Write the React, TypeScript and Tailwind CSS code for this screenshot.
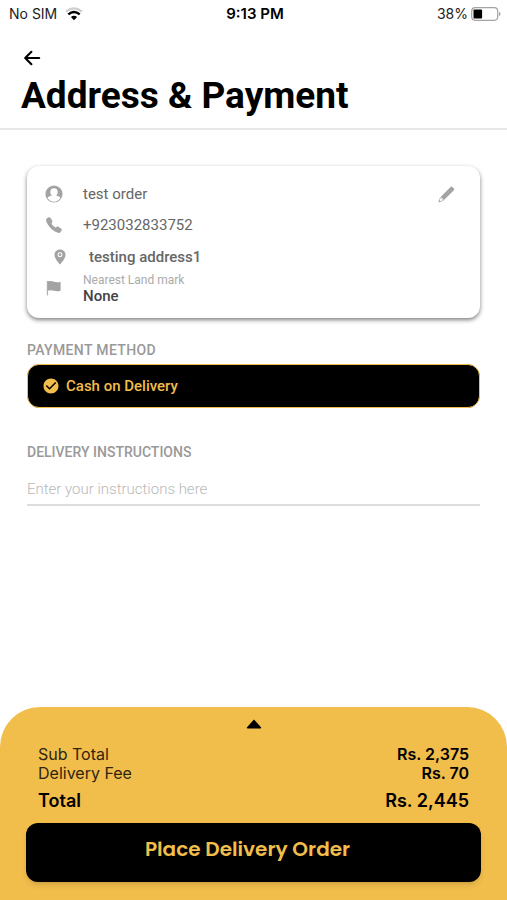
import { useState } from "react";
import { IoCall } from "react-icons/io5";
import { MdCheckCircle } from "react-icons/md";

function WifiIcon() {
  return (
    <svg viewBox="0 0 18 14" className="w-[18px] h-[14px]" fill="none">
      <path d="M1 4.6Q9 -1.8 17 4.6" stroke="#cfcfcf" strokeWidth="2.2" />
      <path d="M3.3 7.4Q9 2.6 14.7 7.4" stroke="#000" strokeWidth="2.4" />
      <path d="M5.9 10Q9 7.4 12.1 10L9 13.2Z" fill="#000" />
    </svg>
  );
}

function BatteryIcon() {
  return (
    <svg viewBox="0 0 30 14" className="w-[30px] h-[14px]" fill="none">
      <rect x="0.7" y="0.7" width="26" height="12.6" rx="3.5" stroke="#a3a3a3" strokeWidth="1.2" />
      <rect x="2.5" y="2.5" width="8.6" height="9" rx="1" fill="#000" />
      <path d="M28 4.8Q29.6 5.6 29.6 7T28 9.2Z" fill="#a3a3a3" />
    </svg>
  );
}

function BackIcon() {
  return (
    <svg
      viewBox="0 0 22 22"
      className="w-[22px] h-[22px]"
      fill="none"
      stroke="currentColor"
      strokeWidth="2.1"
      strokeLinecap="round"
      strokeLinejoin="round"
    >
      <path d="M18.2 11H4.4M10.4 4.8L4.2 11L10.4 17.2" />
    </svg>
  );
}

function UserIcon() {
  return (
    <svg viewBox="0 0 18 18" className="w-[18px] h-[18px]">
      <circle cx="9" cy="9" r="8.6" fill="#a3a3a3" />
      <path
        d="M9 3.2C11.3 3.2 12.7 4.8 12.7 6.9C12.7 8.5 12 9.8 11 10.5C13.4 10.9 14.9 11.7 15.4 13A7.4 7.4 0 0 1 2.6 13C3.1 11.7 4.6 10.9 7 10.5C6 9.8 5.3 8.5 5.3 6.9C5.3 4.8 6.7 3.2 9 3.2Z"
        fill="#fff"
      />
    </svg>
  );
}

function PinIcon() {
  return (
    <svg viewBox="0 0 18 18" className="w-[18px] h-[18px]">
      <path
        d="M9 1.4C5.8 1.4 3.5 3.7 3.5 6.7C3.5 10.3 7.2 14.2 9 16.6C10.8 14.2 14.5 10.3 14.5 6.7C14.5 3.7 12.2 1.4 9 1.4Z"
        fill="#a3a3a3"
      />
      <circle cx="9" cy="6.7" r="1.9" fill="none" stroke="#fff" strokeWidth="1.1" />
    </svg>
  );
}

function FlagIcon() {
  return (
    <svg viewBox="0 0 18 18" className="w-[18px] h-[18px]">
      <path d="M2.4 2V16.4" stroke="#b5b5b5" strokeWidth="1.3" />
      <path
        d="M2.6 2.4C5.2 1.4 7.2 2.2 9 2.8C11.2 3.5 13.2 3.3 15.6 2.9V11.7C13.2 12.5 11 12.4 9 11.8C6.8 11.1 5 10.8 2.6 11.8Z"
        fill="#a3a3a3"
      />
    </svg>
  );
}

function PencilIcon() {
  return (
    <svg viewBox="0 0 20 20" className="w-5 h-5">
      <path
        d="M14.6 2.9Q15.4 2.1 16.2 2.9L17.9 4.6Q18.7 5.4 17.9 6.2L8 16L4.8 12.7Z"
        fill="#a3a3a3"
      />
      <path d="M4.4 13.1L2.9 17.9L7.6 16.4Z" fill="#fff" stroke="#b5b5b5" strokeWidth="0.8" />
      <path d="M3.4 16L2.6 18.2L4.8 17.4Z" fill="#a3a3a3" />
    </svg>
  );
}

function CaretUpIcon() {
  return (
    <svg viewBox="0 0 16 10" className="w-4 h-[10px]">
      <path d="M8 0.4L15 8.2Q15.5 9.4 14.4 9.4H1.6Q0.5 9.4 1 8.2Z" fill="#000" />
    </svg>
  );
}

function StatusBar() {
  return (
    <div className="grid grid-cols-3 items-center h-7 pl-[9px] pr-[6px] font-[Inter,sans-serif] text-sm text-[#222]">
      <div className="flex items-center gap-2">
        <span>No SIM</span>
        <WifiIcon />
      </div>
      <span className="text-center text-[15px] font-semibold text-black">9:13 PM</span>
      <div className="flex items-center justify-end gap-[3px]">
        <span>38%</span>
        <BatteryIcon />
      </div>
    </div>
  );
}

function AddressCard() {
  return (
    <section className="relative mx-[27px] mt-9 rounded-xl bg-white px-[18px] pt-[17px] pb-[14px] text-[#666] shadow-[0_2px_4px_rgba(0,0,0,0.5)]">
      <button aria-label="Edit address" className="absolute right-6 top-[18px]">
        <PencilIcon />
      </button>
      <ul className="text-[15px]">
        <li className="flex items-center gap-5 h-[22px]">
          <UserIcon />
          <span>test order</span>
        </li>
        <li className="mt-[9px] flex items-center gap-5 h-[22px]">
          <IoCall size={18} className="text-[#a3a3a3]" />
          <span>+923032833752</span>
        </li>
        <li className="mt-[10px] flex items-center gap-5 h-[22px] pl-[6px] font-medium">
          <PinIcon />
          <span>testing address1</span>
        </li>
        <li className="mt-1 flex items-center gap-5">
          <FlagIcon />
          <div>
            <p className="text-xs leading-4 text-[#aaa]">Nearest Land mark</p>
            <p className="text-[15px] leading-4 font-medium text-[#444]">None</p>
          </div>
        </li>
      </ul>
    </section>
  );
}

function OrderSummary() {
  const [open, setOpen] = useState(true);

  return (
    <footer className="mt-auto rounded-t-[40px] bg-[#f1bd4b] px-[26px] pt-[7px] pb-[18px] font-[Inter,sans-serif] text-black">
      <button
        aria-label="Toggle summary"
        onClick={() => setOpen(!open)}
        className="mx-auto flex h-5 w-8 items-center justify-center"
      >
        <CaretUpIcon />
      </button>
      {open && (
        <dl className="mt-[11px] px-3 text-base leading-[19px]">
          <div className="flex justify-between">
            <dt className="text-[#2e2510]">Sub Total</dt>
            <dd className="font-semibold">Rs. 2,375</dd>
          </div>
          <div className="flex justify-between">
            <dt className="text-[#2e2510]">Delivery Fee</dt>
            <dd className="font-semibold">Rs. 70</dd>
          </div>
          <div className="mt-1 flex justify-between text-lg leading-7 font-semibold">
            <dt>Total</dt>
            <dd>Rs. 2,445</dd>
          </div>
        </dl>
      )}
      <button className="mt-2 h-[59px] w-full rounded-xl bg-black pr-3 pb-2 font-[Poppins,Inter,sans-serif] text-xl font-semibold text-[#f1bd4b] shadow-md">
        Place Delivery Order
      </button>
    </footer>
  );
}

export default function App() {
  const [instructions, setInstructions] = useState("");

  return (
    <div className="flex min-h-screen flex-col bg-white font-[Roboto,sans-serif]">
      <StatusBar />
      <header className="border-b-2 border-[#e8e8e8] px-[21px] pt-[19px] pb-[10px]">
        <button aria-label="Back" className="block">
          <BackIcon />
        </button>
        <h1 className="mt-[5px] text-[37px] leading-[44px] font-bold text-black">
          Address &amp; Payment
        </h1>
      </header>

      <main>
        <AddressCard />

        <section className="mx-[27px] mt-[22px]">
          <h2 className="text-sm leading-5 font-medium tracking-wide text-[#999]">
            PAYMENT METHOD
          </h2>
          <button className="mt-1 flex h-11 w-full items-center gap-[6px] rounded-xl border border-[#f1bd4b] bg-black px-[14px] text-[15px] font-medium text-[#f1bd4b]">
            <MdCheckCircle size={18} />
            Cash on Delivery
          </button>
        </section>

        <section className="mx-[27px] mt-[34px]">
          <label
            htmlFor="instructions"
            className="block text-sm leading-5 font-medium text-[#999]"
          >
            DELIVERY INSTRUCTIONS
          </label>
          <input
            id="instructions"
            type="text"
            value={instructions}
            onChange={(e) => setInstructions(e.target.value)}
            placeholder="Enter your instructions here"
            className="mt-3 h-8 w-full border-b-2 border-[#ddd] text-[15px] font-light placeholder:text-[#b8b8b8] outline-none"
          />
        </section>
      </main>

      <OrderSummary />
    </div>
  );
}
